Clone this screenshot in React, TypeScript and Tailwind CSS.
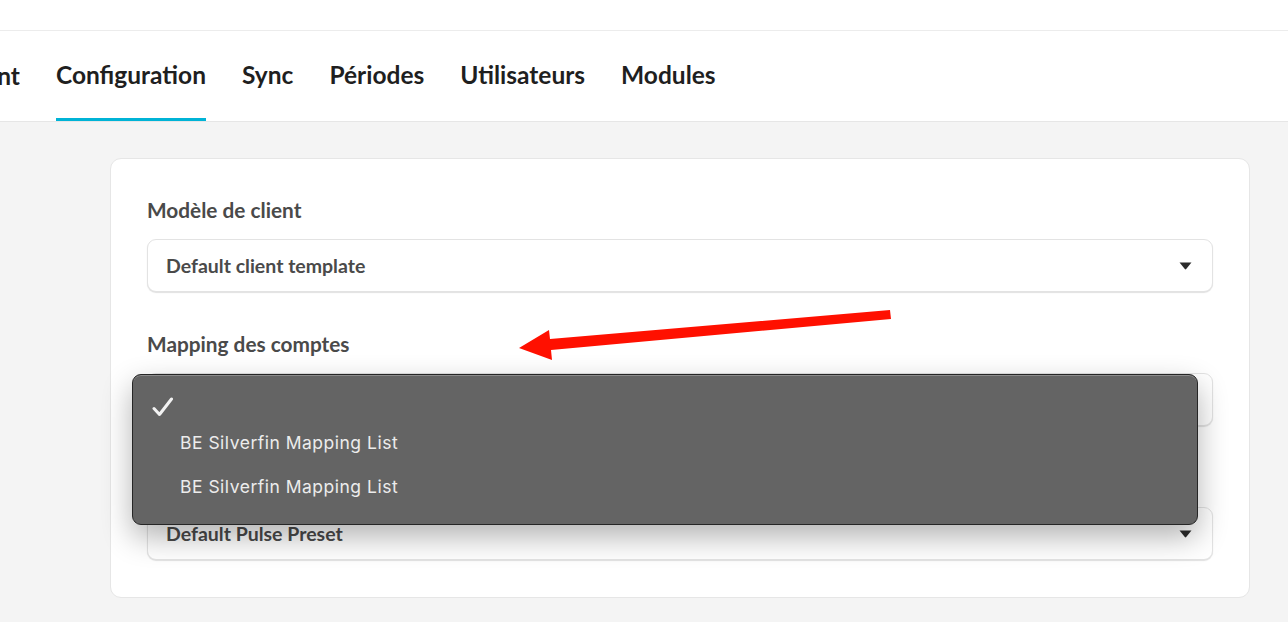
import React from 'react';

const tabs = ['Configuration', 'Sync', 'Périodes', 'Utilisateurs', 'Modules'];

const Caret: React.FC = () => (
  <svg width="13" height="8" viewBox="0 0 13 8" className="shrink-0">
    <path d="M0.5 0.5 H12.5 L7.2 7 Q6.5 7.8 5.8 7 Z" fill="#2b2b2b" />
  </svg>
);

interface SelectBoxProps {
  value: string;
}

const SelectBox: React.FC<SelectBoxProps> = ({ value }) => (
  <div className="h-[53px] rounded-[9px] border border-[#e3e3e3] bg-white shadow-[0_1px_1px_rgba(0,0,0,0.12)] flex items-center justify-between pl-[18px] pr-[20px]">
    <span className="text-[19.5px] font-bold text-[#4a4a4a]">{value}</span>
    <Caret />
  </div>
);

const Field: React.FC<{ label: string; value: string; children?: React.ReactNode }> = ({ label, value, children }) => (
  <div>
    <div className="text-[20.8px] leading-[24px] font-bold text-[#4a4a4a] mb-[17px]">{label}</div>
    <div className="relative">
      <SelectBox value={value} />
      {children}
    </div>
  </div>
);

const DropdownMenu: React.FC = () => (
  <div
    className="absolute left-[-15px] top-[1px] w-full h-[151px] rounded-[9px] bg-[#646464] border border-[#262626] shadow-[inset_0_1px_0_rgba(255,255,255,0.25),0_12px_30px_rgba(0,0,0,0.3)] pt-[2px] z-10"
    style={{ fontFamily: 'Inter, "Open Sans", sans-serif' }}
  >
    <div className="h-[44px] flex items-end pl-[19px] pb-[4px]">
      <svg width="22" height="20" viewBox="0 0 22 20">
        <path d="M2 11.5 L7.5 17.5 L19.5 2" fill="none" stroke="#f2f2f2" strokeWidth="3" strokeLinecap="round" strokeLinejoin="round" />
      </svg>
    </div>
    <div className="h-[44px] flex items-center pl-[47px] text-[17.5px] text-[#ececec] tracking-[0.5px]">BE Silverfin Mapping List</div>
    <div className="h-[44px] flex items-center pl-[47px] text-[17.5px] text-[#ececec] tracking-[0.5px]">BE Silverfin Mapping List</div>
  </div>
);

export default function App() {
  return (
    <div className="relative min-h-[622px] bg-[#f4f4f4] overflow-hidden" style={{ fontFamily: 'Lato, "Open Sans", sans-serif' }}>
      <div className="h-[31px] bg-white border-b border-[#ececec]" />
      <nav className="h-[91px] bg-white border-b border-[#e6e6e6] flex items-stretch gap-9">
        <div className="w-[20px] overflow-hidden flex justify-end items-center">
          <span className="whitespace-nowrap text-[24.5px] font-bold text-[#1f1f1f]">Client</span>
        </div>
        {tabs.map((t) => (
          <div
            key={t}
            className={`flex items-center text-[24.5px] font-bold text-[#1f1f1f] border-b-[3px] ${t === 'Configuration' ? 'border-[#00b3d6]' : 'border-transparent'} pt-[1px]`}
          >
            {t}
          </div>
        ))}
      </nav>

      <main className="pl-[110px] pr-[38px] pt-[36px] pb-[24px]">
        <div className="bg-white border border-[#e6e6e6] rounded-[11px] px-9 pt-[39px] pb-[37px] flex flex-col gap-[40px]">
          <Field label="Modèle de client" value="Default client template" />
          <Field label="Mapping des comptes" value="BE Silverfin Mapping List">
            <DropdownMenu />
          </Field>
          <Field label="Preset Pulse" value="Default Pulse Preset" />
        </div>
      </main>

      <svg className="absolute left-0 top-0 pointer-events-none" width="1288" height="622" viewBox="0 0 1288 622">
        <polygon
          points="890,310 891,319 551,350 552,360 519,348 549,330 550,339"
          fill="#ff1000"
        />
      </svg>
    </div>
  );
}
